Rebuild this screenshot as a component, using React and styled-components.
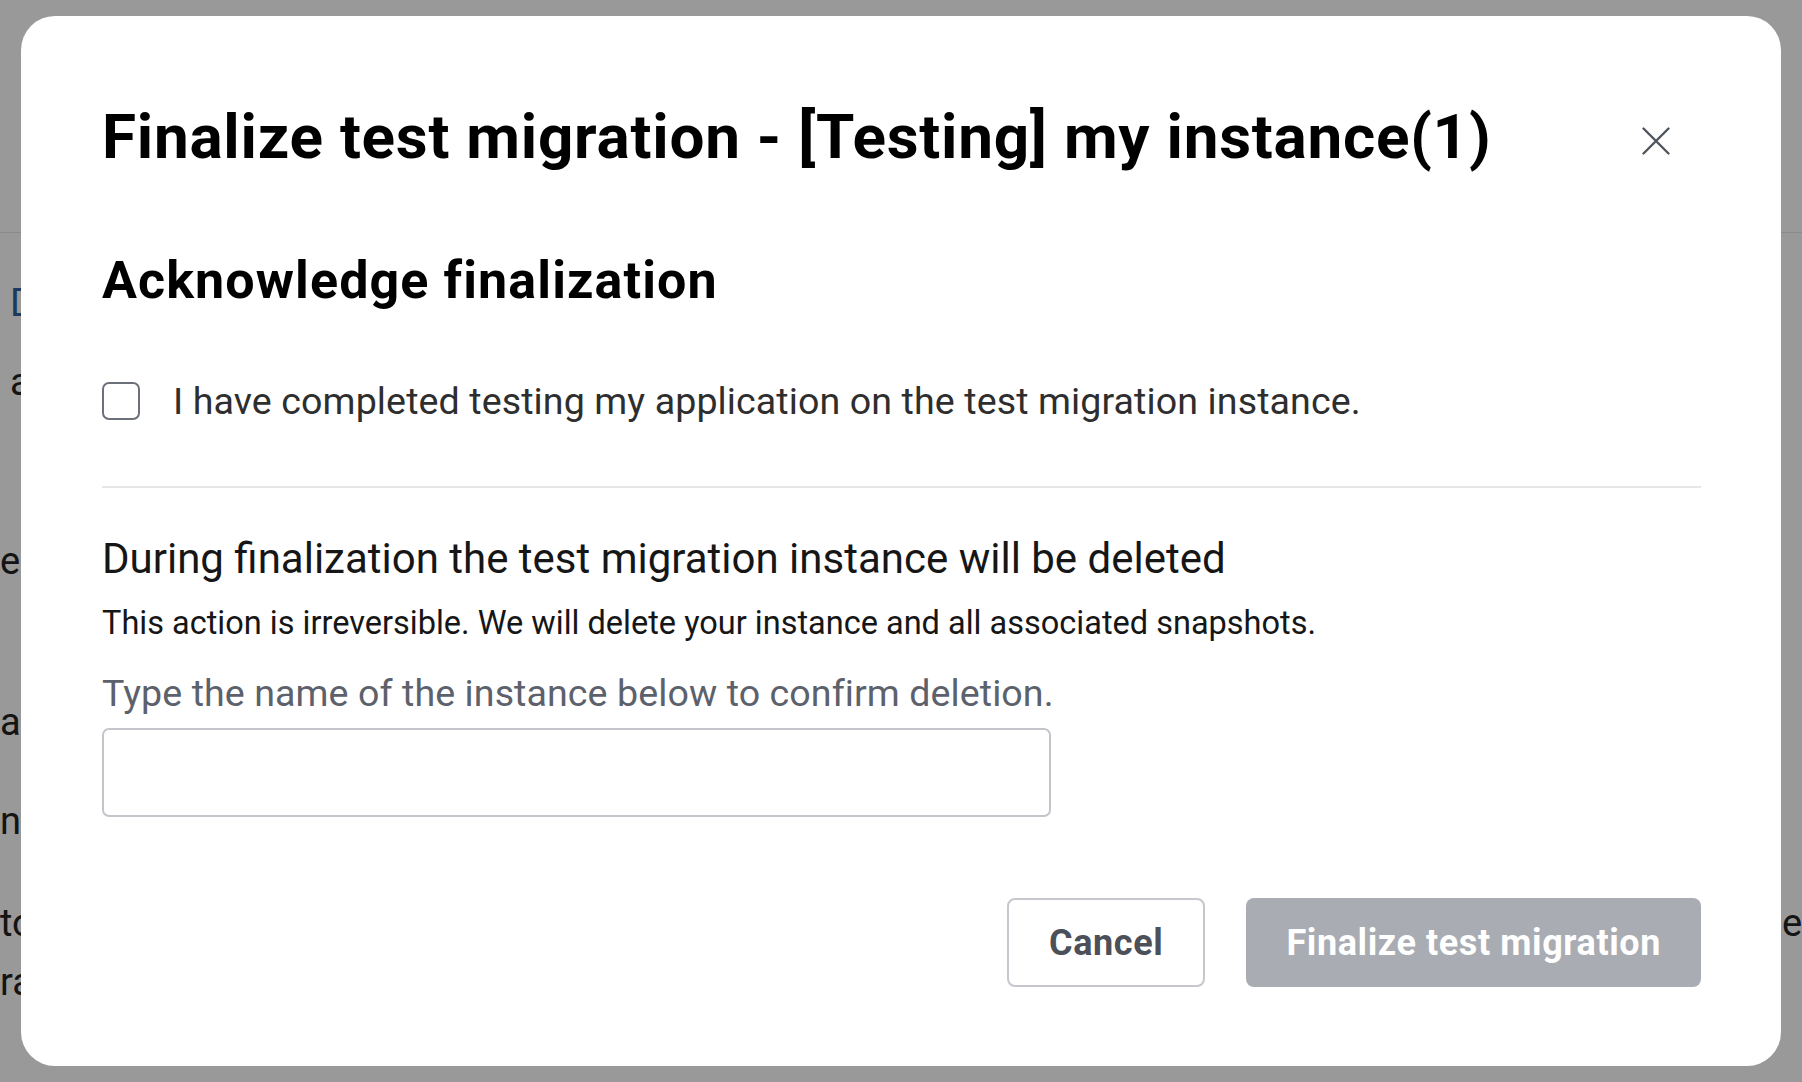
import React, { useState } from "react";
import styled, { createGlobalStyle } from "styled-components";

const GlobalStyle = createGlobalStyle`
  html, body {
    margin: 0;
    padding: 0;
    background: #ffffff;
  }
  body {
    font-family: Roboto, "Liberation Sans", sans-serif;
    overflow: hidden;
  }
`;

// page behind the dialog (only its edges show)
const Page = styled.div`
  width: 100%;
  min-height: 1082px;
  background: #ffffff;
`;

const PageHeader = styled.header`
  height: 232px;
  border-bottom: 1px solid #e6e6e6;
`;

const PageLine = styled.div`
  margin-top: ${(p) => p.$gap}px;
  padding-left: ${(p) => p.$indent}px;
  display: grid;
  grid-template-columns: 1782px 1fr;
  font-size: 38px;
  line-height: 46px;
  color: ${(p) => (p.$link ? "#2f5f9e" : "#222222")};
  white-space: nowrap;
  overflow: hidden;
`;

const Overlay = styled.div`
  position: fixed;
  inset: 0;
  background: rgba(0, 0, 0, 0.4);
  display: flex;
  align-items: center;
  justify-content: center;
`;

const Dialog = styled.div`
  width: 1760px;
  box-sizing: border-box;
  padding: 85px 80px 79px 81px;
  background: #ffffff;
  border-radius: 34px;
  display: flex;
  flex-direction: column;
`;

const DialogHeader = styled.div`
  display: flex;
  justify-content: space-between;
  align-items: flex-start;
`;

const Title = styled.h2`
  margin: 0;
  font-size: 62px;
  line-height: 72px;
  font-weight: 700;
  letter-spacing: 0.75px;
  color: #000000;
`;

const CloseButton = styled.button`
  margin: 26px 31px 0 0;
  padding: 0;
  width: 28px;
  height: 28px;
  border: none;
  background: none;
  cursor: pointer;
  display: flex;
`;

const SectionTitle = styled.h3`
  margin: 77px 0 0;
  font-size: 52px;
  line-height: 62px;
  font-weight: 700;
  letter-spacing: 1.1px;
  color: #000000;
`;

const CheckRow = styled.label`
  margin-top: 66px;
  display: flex;
  align-items: center;
  gap: 33px;
  cursor: pointer;
`;

const Box = styled.input`
  appearance: none;
  margin: 0;
  width: 38px;
  height: 38px;
  box-sizing: border-box;
  border: 2px solid #6c7078;
  border-radius: 7px;
  background: #ffffff;
  cursor: pointer;

  &:checked {
    background: #2d2f33;
    border-color: #2d2f33;
  }
`;

const CheckText = styled.span`
  font-size: 37.6px;
  line-height: 46px;
  letter-spacing: 0.1px;
  color: #2e2e2e;
`;

const Divider = styled.hr`
  margin: 62px 0 0;
  border: none;
  height: 2px;
  background: #e6e6e6;
`;

const Warning = styled.p`
  margin: 46px 0 0;
  font-size: 42px;
  line-height: 50px;
  color: #161616;
`;

const Note = styled.p`
  margin: 19px 0 0;
  font-size: 32.5px;
  line-height: 40px;
  color: #161616;
`;

const FieldLabel = styled.label`
  margin-top: 28px;
  font-size: 37.6px;
  line-height: 44px;
  letter-spacing: 0.08px;
  color: #5c616b;
`;

const NameInput = styled.input`
  margin-top: 13px;
  width: 949px;
  height: 89px;
  box-sizing: border-box;
  border: 2px solid #c3c5ca;
  border-radius: 7px;
  padding: 0 24px;
  font-family: inherit;
  font-size: 36px;
  color: #161616;
  outline: none;
`;

const Footer = styled.div`
  margin-top: 81px;
  display: flex;
  justify-content: flex-end;
  gap: 41px;
`;

const Button = styled.button`
  height: 89px;
  box-sizing: border-box;
  padding: 0 40px;
  border-radius: 8px;
  font-family: inherit;
  font-size: 36px;
  font-weight: 700;
  letter-spacing: 0.6px;
  cursor: pointer;
  border: ${(p) => (p.$primary ? "none" : "2px solid #c5c7cc")};
  background: ${(p) => (p.$primary ? "#a9acb2" : "#ffffff")};
  color: ${(p) => (p.$primary ? "#ffffff" : "#4b5059")};

  &:disabled {
    cursor: not-allowed;
  }
`;

const backdropLines = [
  { gap: 47, indent: 10, text: "Details", link: true },
  { gap: 33, indent: 10, text: "about this migration" },
  { gap: 133, indent: 0, text: "easy steps to follow" },
  { gap: 115, indent: 0, text: "application data" },
  { gap: 53, indent: 0, text: "new instance" },
  { gap: 56, indent: 0, text: "to finish the", right: "ep" },
  { gap: 13, indent: 0, text: "rather than" },
];

const CloseIcon = () => (
  <svg width="28" height="28" viewBox="0 0 28 28" fill="none">
    <path d="M1.5 1.5 26.5 26.5M26.5 1.5 1.5 26.5" stroke="#50555d" strokeWidth="2.4" strokeLinecap="round" />
  </svg>
);

const App = () => {
  const [checked, setChecked] = useState(false);
  const [name, setName] = useState("");

  return (
    <>
      <GlobalStyle />
      <Page>
        <PageHeader />
        {backdropLines.map((line, i) => (
          <PageLine key={i} $gap={line.gap} $indent={line.indent} $link={line.link}>
            <span>{line.text}</span>
            {line.right && <span>{line.right}</span>}
          </PageLine>
        ))}
      </Page>

      <Overlay>
        <Dialog role="dialog" aria-modal="true">
          <DialogHeader>
            <Title>Finalize test migration - [Testing] my instance(1)</Title>
            <CloseButton aria-label="Close">
              <CloseIcon />
            </CloseButton>
          </DialogHeader>

          <SectionTitle>Acknowledge finalization</SectionTitle>
          <CheckRow>
            <Box type="checkbox" checked={checked} onChange={(e) => setChecked(e.target.checked)} />
            <CheckText>I have completed testing my application on the test migration instance.</CheckText>
          </CheckRow>

          <Divider />

          <Warning>During finalization the test migration instance will be deleted</Warning>
          <Note>This action is irreversible. We will delete your instance and all associated snapshots.</Note>
          <FieldLabel htmlFor="instance-name">Type the name of the instance below to confirm deletion.</FieldLabel>
          <NameInput id="instance-name" value={name} onChange={(e) => setName(e.target.value)} />

          <Footer>
            <Button>Cancel</Button>
            <Button $primary disabled={!checked || name !== "[Testing] my instance(1)"}>
              Finalize test migration
            </Button>
          </Footer>
        </Dialog>
      </Overlay>
    </>
  );
};

export default App;
